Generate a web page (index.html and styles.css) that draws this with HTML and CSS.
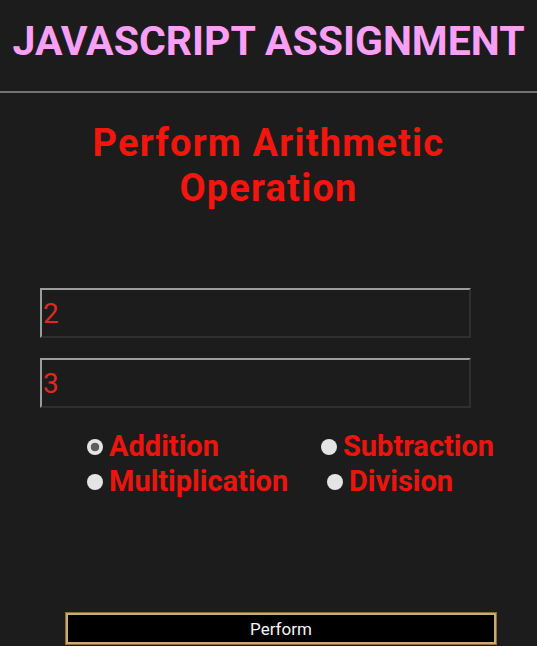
FILE: index.html
```html
<!DOCTYPE html>
<html lang="en">
<head>
<meta charset="utf-8">
<title>JavaScript Assignment</title>
<link rel="stylesheet" href="styles.css">
</head>
<body>
<header class="top">
  <h1 class="title">JAVASCRIPT ASSIGNMENT</h1>
</header>
<main class="content">
  <h2 class="heading">Perform Arithmetic<br>Operation</h2>
  <form class="calc">
    <input class="num" type="text" value="2">
    <input class="num num-second" type="text" value="3">
    <div class="ops">
      <div class="op-row">
        <label class="op op-first-a"><input class="radio" type="radio" name="op" checked>Addition</label>
        <label class="op"><input class="radio" type="radio" name="op">Subtraction</label>
      </div>
      <div class="op-row">
        <label class="op op-first-b"><input class="radio" type="radio" name="op">Multiplication</label>
        <label class="op"><input class="radio" type="radio" name="op">Division</label>
      </div>
    </div>
    <button class="perform" type="button">Perform</button>
  </form>
</main>
</body>
</html>
```

FILE: styles.css
```css
html, body {
  margin: 0;
  padding: 0;
  background: #1c1c1c;
  font-family: Roboto, "Liberation Sans", sans-serif;
}

.top {
  height: 91px;
  border-bottom: 2px solid #727272;
  box-sizing: content-box;
}

.title {
  margin: 0;
  padding-top: 15px;
  font-size: 41px;
  line-height: 53px;
  font-weight: 700;
  color: #f9a0f6;
  text-align: center;
  white-space: nowrap;
}

.content {
  display: flex;
  flex-direction: column;
}

.heading {
  margin: 28px 0 0;
  font-size: 38px;
  line-height: 45px;
  font-weight: 700;
  letter-spacing: 1.2px;
  color: #f2160e;
  text-align: center;
}

.calc {
  display: flex;
  flex-direction: column;
  align-items: flex-start;
}

.num {
  margin: 77px 0 0 40px;
  width: 431px;
  height: 50px;
  box-sizing: border-box;
  padding: 0 0 0 1px;
  background: #1c1c1c;
  border-style: solid;
  border-width: 2px;
  border-color: #9c9c9c #2f2f2f #2f2f2f #9c9c9c;
  font-family: Roboto, "Liberation Sans", sans-serif;
  font-size: 28px;
  color: #dc2a22;
  outline: none;
}

.num-second {
  margin-top: 20px;
}

.ops {
  margin: 21px 0 0 87px;
  display: flex;
  flex-direction: column;
}

.op-row {
  display: flex;
  align-items: center;
  height: 35px;
}

.op {
  display: flex;
  align-items: center;
  font-size: 29px;
  line-height: 35px;
  font-weight: 700;
  color: #ea160e;
}

.op-first-a {
  width: 234px;
}

.op-first-b {
  width: 240px;
}

.radio {
  appearance: none;
  -webkit-appearance: none;
  margin: 0 6px 0 0;
  width: 16px;
  height: 16px;
  border-radius: 50%;
  background: #e4e4e4;
  border: none;
  flex: none;
}

.radio:checked {
  background: radial-gradient(circle, #5e5e5e 0 4px, #e4e4e4 4.6px);
}

.perform {
  margin: 113px 0 0 65px;
  width: 432px;
  height: 33px;
  box-sizing: border-box;
  background: #000;
  border: 1px solid #8c6c3c;
  box-shadow: inset 0 0 0 2px #c9ab78;
  color: #f4f4f4;
  font-family: Roboto, "Liberation Sans", sans-serif;
  font-size: 17px;
  padding: 0;
}
```
